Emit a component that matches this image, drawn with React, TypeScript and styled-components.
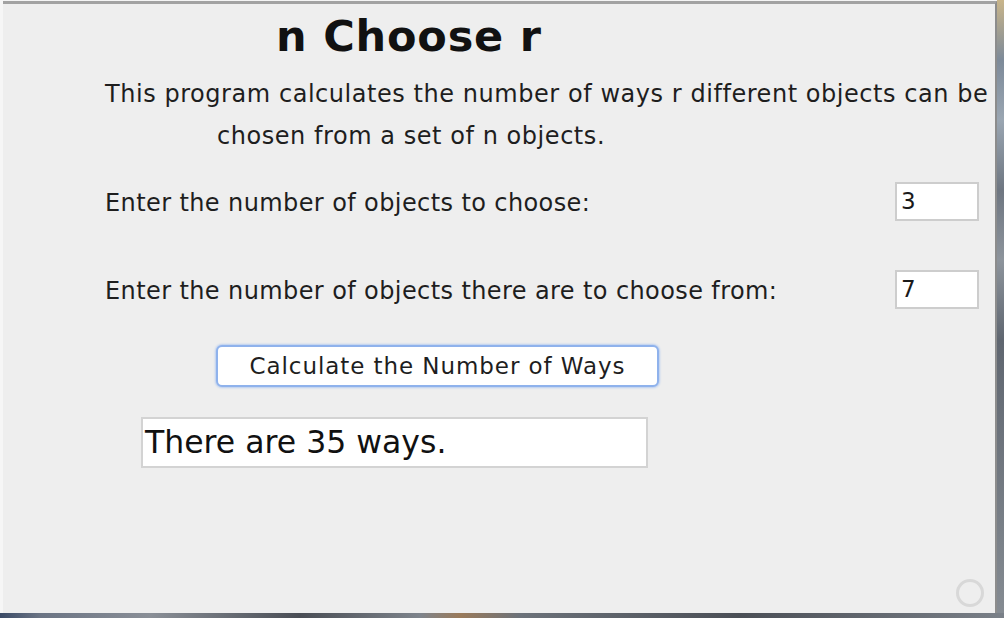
import React from "react";
import styled, { createGlobalStyle } from "styled-components";

const Global = createGlobalStyle`
  html, body { margin: 0; padding: 0; background: #f4f4f4; }
  body { font-family: "DejaVu Sans", "Liberation Sans", sans-serif; }
  #root { width: 1004px; height: 618px; overflow: hidden; }
`;

const Screen = styled.div`
  width: 1004px;
  height: 618px;
  display: flex;
  flex-direction: column;
  overflow: hidden;
`;

const TopRow = styled.div`
  display: flex;
  flex: 0 0 auto;
  height: 613px;
`;

const LeftGap = styled.div`
  width: 3px;
  background: #f6f6f6;
`;

const Window = styled.div`
  position: relative;
  width: 994px;
  margin-top: 1px;
  border-top: 3px solid #a2a2a2;
  border-right: 2px solid #8c8c8c;
  background: #eeeeee;
  box-sizing: border-box;
  display: flex;
  flex-direction: column;
  padding-left: 102px;
`;

const DesktopStrip = styled.div`
  flex: 1;
  background: linear-gradient(
    to bottom,
    #c9b58a 0px,
    #7d8a99 60px,
    #9aa6b2 120px,
    #6e7681 190px,
    #8d949c 260px,
    #5f6670 340px,
    #858b92 613px
  );
`;

const BottomStrip = styled.div`
  flex: 1;
  background: linear-gradient(
    to right,
    #3a4a66 0px,
    #6b7484 40px,
    #8a8f97 150px,
    #4a4e55 300px,
    #7e848c 420px,
    #9a7a5a 460px,
    #6c727a 520px,
    #4b4f56 740px,
    #7a8088 1004px
  );
`;

const Title = styled.h1`
  margin: 0;
  padding-left: 171px;
  padding-top: 2px;
  height: 60px;
  font-family: "DejaVu Sans", sans-serif;
  font-weight: bold;
  font-size: 43px;
  letter-spacing: 0.8px;
  line-height: 60px;
  color: #111;
`;

const Description = styled.div`
  margin-top: 7px;
  font-size: 24px;
  line-height: 42px;
  letter-spacing: 0.55px;
  color: #1e1e1e;
`;

const DescLine = styled.div<{ $indent?: number }>`
  padding-left: ${(p) => p.$indent ?? 0}px;
  white-space: nowrap;
`;

const FormRow = styled.div<{ $top: number }>`
  display: flex;
  align-items: center;
  justify-content: space-between;
  height: 39px;
  margin-top: ${(p) => p.$top}px;
  padding-right: 16px;
`;

const Label = styled.span`
  font-size: 24px;
  letter-spacing: 0.4px;
  color: #1e1e1e;
  white-space: nowrap;
  padding-top: 3px;
`;

const Field = styled.div`
  width: 84px;
  height: 39px;
  box-sizing: border-box;
  background: #fff;
  border: 2px solid #cdcdcd;
  font-size: 23px;
  line-height: 35px;
  padding-left: 4px;
  color: #1a1a1a;
`;

const CalcButton = styled.button`
  margin-top: 36px;
  margin-left: 111px;
  width: 443px;
  height: 42px;
  box-sizing: border-box;
  background: #ffffff;
  border: 2px solid #8fb2ec;
  border-radius: 6px;
  box-shadow: 0 0 2px 1px #b8cdf0;
  font-family: "DejaVu Sans", sans-serif;
  font-size: 23px;
  letter-spacing: 0.93px;
  color: #1e1e1e;
  padding: 0;
  cursor: pointer;
`;

const Result = styled.div`
  margin-top: 30px;
  margin-left: 36px;
  width: 507px;
  height: 51px;
  box-sizing: border-box;
  background: #fff;
  border: 2px solid #d3d3d3;
  font-size: 31.5px;
  line-height: 47px;
  padding-left: 2px;
  color: #111;
  white-space: nowrap;
`;

const ResizeRing = styled.div`
  position: absolute;
  right: 11px;
  bottom: 6px;
  width: 22px;
  height: 22px;
  border-radius: 50%;
  border: 3px solid #d8d8d8;
`;

export default function App() {
  return (
    <>
      <Global />
      <Screen>
        <TopRow>
          <LeftGap />
          <Window>
            <Title>n Choose r</Title>
            <Description>
              <DescLine>
                This program calculates the number of ways r different objects can be
              </DescLine>
              <DescLine $indent={112}>chosen from a set of n objects.</DescLine>
            </Description>
            <FormRow $top={25}>
              <Label>Enter the number of objects to choose:</Label>
              <Field>3</Field>
            </FormRow>
            <FormRow $top={49}>
              <Label>Enter the number of objects there are to choose from:</Label>
              <Field>7</Field>
            </FormRow>
            <CalcButton>Calculate the Number of Ways</CalcButton>
            <Result>There are 35 ways.</Result>
            <ResizeRing />
          </Window>
          <DesktopStrip />
        </TopRow>
        <BottomStrip />
      </Screen>
    </>
  );
}
